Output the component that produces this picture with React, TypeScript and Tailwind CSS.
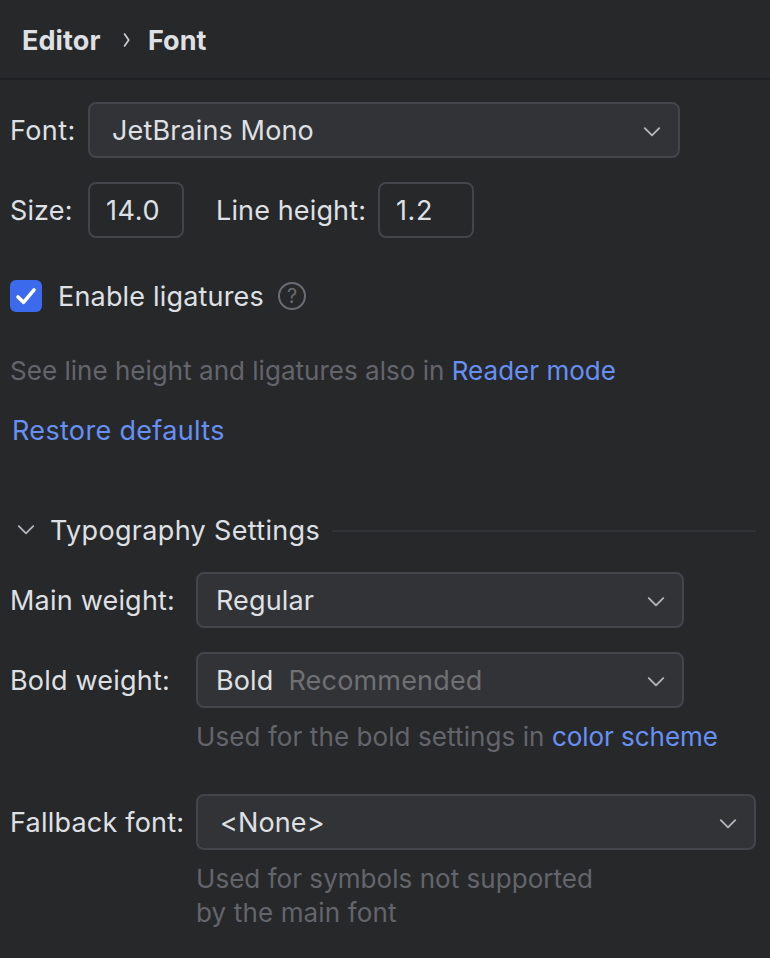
import type { ReactNode } from "react";

function Chevron({ className = "" }: { className?: string }) {
  return (
    <svg className={`block shrink-0 ${className}`} width="18" height="10" viewBox="0 0 18 10" fill="none" stroke="#b4b7be" strokeWidth="1.8" strokeLinecap="round" strokeLinejoin="round">
      <path d="M1.8 1.2 9 8.4 16.2 1.2" />
    </svg>
  );
}

function Select({ className, children }: { className: string; children: ReactNode }) {
  return (
    <div className={`flex h-14 shrink-0 items-center justify-between rounded-lg border-2 border-[#43454a] bg-[#323337] pr-[17px] ${className}`}>
      <div className="flex pt-[2px] whitespace-pre">{children}</div>
      <Chevron className="mt-[3px]" />
    </div>
  );
}

function NumberField({ value }: { value: string }) {
  return <div className="flex h-14 w-24 shrink-0 items-center rounded-lg border-2 border-[#43454a] pt-[2px] pl-4 tracking-[0.6px]">{value}</div>;
}

export default function App() {
  return (
    <main className="h-[958px] w-[770px] overflow-hidden bg-[#27282a] font-['Inter',sans-serif] text-[27px] leading-[34px] tracking-[0.13px] whitespace-nowrap text-[#dfe0e3]">
      <header className="flex h-20 items-center border-b-2 border-[#1e1f22] pt-[4px] pl-[22px] font-bold tracking-normal">
        <span className="w-[79px] tracking-[0.1px]">Editor</span>
        <svg className="mr-[16px] mb-[2px] ml-[21px]" width="10" height="16" viewBox="0 0 10 16" fill="none" stroke="#ced0d6" strokeWidth="1.7">
          <path d="m2.2 1.5 4.5 6.5-4.5 6.5" />
        </svg>
        <span>Font</span>
      </header>
      <section className="flex flex-col pt-[22px] pl-[10px]">
        <div className="flex items-center">
          <label className="w-[78px] pt-[2px] tracking-[0.4px]">Font:</label>
          <Select className="w-[592px] pl-[22px]">JetBrains Mono</Select>
        </div>
        <div className="mt-6 flex items-center">
          <label className="w-[78px] pt-[2px]">Size:</label>
          <NumberField value="14.0" />
          <label className="ml-8 w-[162px] pt-[2px]">Line height:</label>
          <NumberField value="1.2" />
        </div>
        <div className="mt-[42px] flex h-8 items-center">
          <span className="flex size-8 items-center justify-center rounded-[6px] bg-[#3b6aec]">
            <svg width="22" height="18" viewBox="0 0 22 18" fill="none" stroke="white" strokeWidth="3.6" strokeLinecap="round" strokeLinejoin="round">
              <path d="m3 10 5.5 5.3L19 2.8" />
            </svg>
          </span>
          <span className="ml-4 w-[206px] pt-[2px] tracking-[0.18px]">Enable ligatures</span>
          <span className="ml-[14px] flex size-7 items-center justify-center rounded-full border-2 border-[#6a6c73] text-[20px] tracking-normal text-[#6a6c73]">?</span>
        </div>
        <p className="mt-[42px] text-[26px] tracking-[0.02px] text-[#64656b]">See line height and ligatures also in <a className="text-[#6790f5]">Reader mode</a></p>
        <a className="mt-[26px] ml-[2px] tracking-[0.33px] text-[#6790f5]">Restore defaults</a>
      </section>
      <section className="mt-[66px] pl-[10px]">
        <h2 className="flex items-center pl-[7px] tracking-[0.33px]">
          <Chevron className="mb-[2px]" />
          <span className="ml-[15px] w-[270px]">Typography Settings</span>
          <span className="mr-[14px] ml-3 h-[2px] flex-1 bg-[#323336]" />
        </h2>
        <div className="mt-[24px] flex items-center">
          <label className="w-[186px] pt-[2px] tracking-[0.2px]">Main weight:</label>
          <Select className="w-[488px] pl-[18px]">Regular</Select>
        </div>
        <div className="mt-6 flex items-center">
          <label className="w-[186px] pt-[2px] tracking-[0.2px]">Bold weight:</label>
          <Select className="w-[488px] pl-[18px]"><span>Bold</span><span className="ml-[15px] tracking-[0.18px] text-[#6f7072]">Recommended</span></Select>
        </div>
        <p className="mt-3 ml-[186px] text-[26px] tracking-[0.09px] text-[#64656b]">Used for the bold settings in <a className="tracking-[-0.05px] text-[#6790f5]">color scheme</a></p>
        <div className="mt-10 flex items-center">
          <label className="w-[186px] pt-[2px] tracking-[0.22px]">Fallback font:</label>
          <Select className="w-[560px] pl-[22px]">{"<None>"}</Select>
        </div>
        <p className="mt-3 ml-[186px] text-[26px] tracking-[0.04px] text-[#64656b]">Used for symbols not supported<br /><span className="tracking-[0.14px]">by the main font</span></p>
      </section>
    </main>
  );
}
